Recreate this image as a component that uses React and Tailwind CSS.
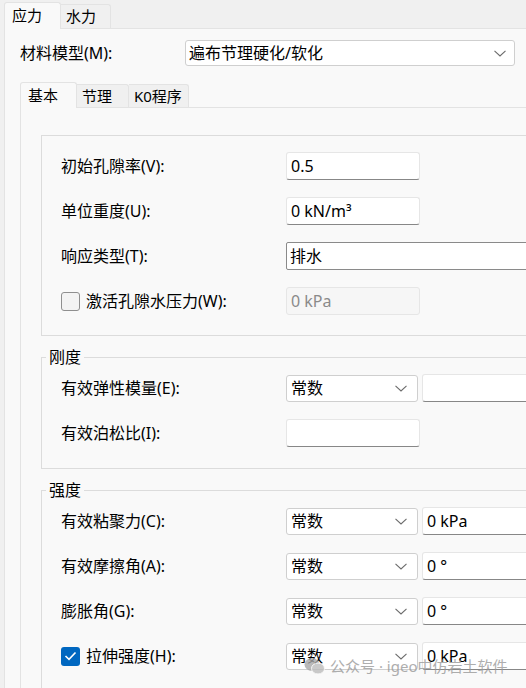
import React from "react";

const Chevron = () => (
  <svg width="12" height="7" viewBox="0 0 12 7" className="shrink-0">
    <polyline points="0.5,0.8 6,6 11.5,0.8" fill="none" stroke="#6b6b6b" strokeWidth="1.1" />
  </svg>
);

const Input = ({ value = "", className = "w-[134px]", disabled = false }) => (
  <div
    className={`${className} h-[28px] flex items-center pl-[4px] rounded-[3px] border border-[#e6e6e6] ${
      disabled ? "bg-[#f6f6f6] text-[#8a8a8a]" : "bg-white border-b-[#878787]"
    }`}
  >
    {value}
  </div>
);

const Combo = ({ value, className = "w-[132px]" }) => (
  <div
    className={`${className} h-[27px] flex items-center justify-between pl-[4px] pr-[10px] rounded-[3px] border border-[#cfcfcf] bg-white`}
  >
    <span>{value}</span>
    <Chevron />
  </div>
);

const Row = ({ label, children, check }) => (
  <div className="flex items-center h-[28px]">
    <div className="w-[244px] pl-[19px] flex items-center shrink-0">
      {check === "off" && (
        <span className="w-[19px] h-[19px] mr-[6px] rounded-[3px] border border-[#8f8f8f] bg-[#f3f3f3]" />
      )}
      {check === "on" && (
        <span className="w-[19px] h-[19px] mr-[6px] rounded-[3px] bg-[#0067c0] flex items-center justify-center">
          <svg width="13" height="10" viewBox="0 0 13 10">
            <polyline points="1.5,5 5,8.3 11.5,1.5" fill="none" stroke="white" strokeWidth="1.6" />
          </svg>
        </span>
      )}
      <span>{label}</span>
    </div>
    {children}
  </div>
);

const Group = ({ title, children, className = "" }) => (
  <div className={`w-[600px] border border-[#dcdcdc] ${className}`}>
    {title ? (
      <>
        <div className="-mt-[11px] ml-[4px] px-[3px] w-fit h-[20px] leading-[20px] bg-[#f9f9f9]">{title}</div>
        <div className="pt-[7px] pb-[21px] flex flex-col gap-[17px]">{children}</div>
      </>
    ) : (
      <div className="pt-[16px] pb-[20px] flex flex-col gap-[17px]">{children}</div>
    )}
  </div>
);

export default function App() {
  return (
    <div className="relative w-[526px] h-[688px] overflow-hidden bg-[#f0f0f0] text-[16px] text-black leading-[20px] [font-family:'Noto_Sans','Noto_Sans_CJK_SC',sans-serif]">
      {/* top tabs */}
      <div className="flex items-end h-[28px] pl-[4px] text-[15px]">
        <div className="relative z-10 -mb-px w-[57px] h-[27px] bg-[#f9f9f9] border border-b-0 border-[#e3e3e3] rounded-t-[3px] pl-[7px] pt-[2px]">
          应力
        </div>
        <div className="w-[50px] h-[24px] bg-[#f0f0f0] border border-l-0 border-b-0 border-[#e3e3e3] rounded-tr-[3px] pl-[5px] pt-[1px]">
          水力
        </div>
      </div>

      {/* outer panel */}
      <div className="ml-[4px] w-[700px] h-[700px] border-t border-l border-[#e3e3e3] bg-[#f9f9f9] pl-[15px]">
        <div className="flex items-center mt-[11px] h-[26px]">
          <div className="w-[165px] shrink-0">材料模型(M):</div>
          <div className="w-[330px] h-[26px] flex items-center justify-between pl-[3px] pr-[8px] rounded-[3px] border border-[#cfcfcf] bg-white">
            <span>遍布节理硬化/软化</span>
            <Chevron />
          </div>
        </div>

        {/* inner tabs */}
        <div className="flex items-end h-[25px] mt-[16px] text-[15px]">
          <div className="relative z-10 -mb-px w-[57px] h-[26px] bg-[#f9f9f9] border border-b-0 border-[#e3e3e3] rounded-t-[3px] pl-[7px] pt-[2px]">
            基本
          </div>
          <div className="w-[52px] h-[23px] bg-[#f0f0f0] border border-l-0 border-b-0 border-[#e3e3e3] rounded-tr-[3px] pl-[5px] pt-[1px]">
            节理
          </div>
          <div className="w-[60px] h-[23px] bg-[#f0f0f0] border border-l-0 border-b-0 border-[#e3e3e3] rounded-tr-[3px] pl-[5px] pt-[1px]">
            K0程序
          </div>
        </div>

        {/* inner panel */}
        <div className="w-[700px] h-[700px] border-t border-l border-[#e3e3e3] pl-[20px] pt-[27px]">
          <Group>
            <Row label="初始孔隙率(V):">
              <Input value="0.5" />
            </Row>
            <Row label="单位重度(U):">
              <Input value="0 kN/m³" />
            </Row>
            <Row label="响应类型(T):">
              <div className="w-[300px] h-[28px] flex items-center pl-[3px] rounded-[2px] border border-[#8a8a8a] bg-white">
                排水
              </div>
            </Row>
            <Row label="激活孔隙水压力(W):" check="off">
              <Input value="0 kPa" disabled />
            </Row>
          </Group>

          <Group title="刚度" className="mt-[21px]">
            <Row label="有效弹性模量(E):">
              <Combo value="常数" />
              <Input className="ml-[4px] w-[150px]" />
            </Row>
            <Row label="有效泊松比(I):">
              <Input />
            </Row>
          </Group>

          <Group title="强度" className="mt-[21px]">
            <Row label="有效粘聚力(C):">
              <Combo value="常数" />
              <Input className="ml-[4px] w-[150px]" value="0 kPa" />
            </Row>
            <Row label="有效摩擦角(A):">
              <Combo value="常数" />
              <Input className="ml-[4px] w-[150px]" value="0 °" />
            </Row>
            <Row label="膨胀角(G):">
              <Combo value="常数" />
              <Input className="ml-[4px] w-[150px]" value="0 °" />
            </Row>
            <Row label="拉伸强度(H):" check="on">
              <Combo value="常数" />
              <Input className="ml-[4px] w-[150px]" value="0 kPa" />
            </Row>
          </Group>
        </div>
      </div>

      {/* watermark */}
      <div className="absolute left-[304px] top-[656px] flex items-center gap-[5px] whitespace-nowrap text-[15px] leading-[20px] text-[#9a9a9a] opacity-80 [font-family:'Noto_Sans','Noto_Sans_CJK_SC',sans-serif]">
        <svg width="21" height="18" viewBox="0 0 21 18">
          <ellipse cx="8" cy="7.5" rx="7.5" ry="6.5" fill="#a8a8a8" />
          <ellipse cx="14" cy="11.5" rx="6.5" ry="5.5" fill="#bdbdbd" stroke="#f9f9f9" strokeWidth="1" />
        </svg>
        <span>公众号 · igeo中仿岩土软件</span>
      </div>
    </div>
  );
}
